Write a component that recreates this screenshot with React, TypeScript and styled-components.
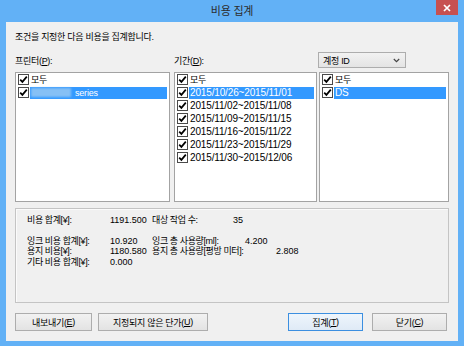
import React from "react";
import styled, { createGlobalStyle } from "styled-components";

const GlobalStyle = createGlobalStyle`
  html, body { margin: 0; padding: 0; }
  body {
    width: 464px;
    height: 346px;
    overflow: hidden;
    font-family: "Liberation Sans", "Noto Sans CJK KR", sans-serif;
    color: #000;
  }
`;

const Window = styled.div`
  width: 464px;
  height: 346px;
  box-sizing: border-box;
  background: #62b1f6;
  padding: 0 6px 5px;
  display: flex;
  flex-direction: column;
`;

const TitleBar = styled.div`
  height: 22px;
  flex: none;
  display: grid;
  grid-template-columns: 1fr auto 1fr;
  align-items: start;
`;

const Title = styled.div`
  grid-column: 2;
  line-height: 23px;
  font-size: 11px;
  color: #2d2d2d;
  letter-spacing: -0.2px;
`;

const CloseButton = styled.div`
  grid-column: 3;
  justify-self: end;
  width: 22px;
  height: 15px;
  background: #c75050;
  display: flex;
  align-items: center;
  justify-content: center;
`;

const Client = styled.div`
  flex: 1;
  background: #f0f0f0;
  padding: 8px 9px 0 9px;
  display: flex;
  flex-direction: column;
  font-size: 9px;
`;

const Intro = styled.div`
  line-height: 14px;
  letter-spacing: -0.3px;
`;

const Header = styled.div`
  display: flex;
  align-items: center;
  height: 16px;
  margin-top: 8px;
`;

const FieldLabel = styled.div<{ $w: number }>`
  width: ${(p) => p.$w}px;
  flex: none;
  letter-spacing: -0.3px;
  padding-top: 1px;
`;

const Combo = styled.div`
  width: 88px;
  height: 16px;
  box-sizing: border-box;
  border: 1px solid #adadad;
  background: linear-gradient(#f2f2f2, #e4e4e4);
  display: flex;
  align-items: center;
  justify-content: space-between;
  padding: 0 5px 0 4px;
  letter-spacing: -0.3px;
`;

const Lists = styled.div`
  display: flex;
  height: 130px;
  margin-top: 4px;
`;

const ListBox = styled.div<{ $w: number; $ml: number }>`
  width: ${(p) => p.$w}px;
  margin-left: ${(p) => p.$ml}px;
  flex: none;
  box-sizing: border-box;
  border: 1px solid #a3a3a3;
  background: #fff;
  padding: 0 0 0 2px;
  display: flex;
  flex-direction: column;
`;

const ListRow = styled.div`
  height: 13px;
  display: flex;
  align-items: center;
`;

const CheckBox = styled.div`
  width: 11px;
  height: 11px;
  box-sizing: border-box;
  border: 1px solid #4a4a4a;
  background: #fff;
  flex: none;
  display: flex;
  align-items: center;
  justify-content: center;
`;

const ItemText = styled.div<{ $selected?: boolean; $date?: boolean }>`
  flex: 1;
  height: 12px;
  line-height: 12px;
  margin: 0 2px 0 1px;
  padding-left: 1px;
  font-size: ${(p) => (p.$date ? "10px" : "9px")};
  letter-spacing: ${(p) => (p.$date ? "-0.15px" : "-0.2px")};
  background: ${(p) => (p.$selected ? "#3399ff" : "transparent")};
  color: ${(p) => (p.$selected ? "#fff" : "#000")};
  display: flex;
  align-items: center;
  white-space: nowrap;
`;

const Blurred = styled.span`
  display: inline-block;
  width: 40px;
  height: 9px;
  margin-right: 4px;
  background: #86c0f5;
  filter: blur(1.2px);
`;

const Summary = styled.div`
  margin-top: 6px;
  height: 95px;
  box-sizing: border-box;
  border: 1px solid #c4c4c4;
  box-shadow: inset 1px 1px 0 #fbfbfb;
  padding: 6px 11px;
  display: flex;
  flex-direction: column;
`;

const SumRow = styled.div<{ $gapTop?: number }>`
  display: grid;
  grid-template-columns: 83px 42px auto;
  line-height: 10.5px;
  height: 10.5px;
  margin-top: ${(p) => p.$gapTop ?? 0}px;
  white-space: nowrap;
`;

const SumLabel = styled.span`
  letter-spacing: -0.4px;
`;

const Pair = styled.span`
  display: flex;
`;

const PairLabel = styled.span<{ $w: number }>`
  width: ${(p) => p.$w}px;
  flex: none;
  letter-spacing: -0.4px;
`;

const ButtonRow = styled.div`
  display: flex;
  justify-content: space-between;
  margin-top: 10px;
  padding-right: 2px;
`;

const ButtonGroup = styled.div<{ $gap: number }>`
  display: flex;
  gap: ${(p) => p.$gap}px;
`;

const Button = styled.div<{ $w: number; $default?: boolean }>`
  width: ${(p) => p.$w}px;
  height: 18px;
  box-sizing: border-box;
  border: 1px solid ${(p) => (p.$default ? "#3c8fe0" : "#adadad")};
  background: ${(p) =>
    p.$default ? "linear-gradient(#eef5fc, #dfeaf6)" : "linear-gradient(#f2f2f2, #e3e3e3)"};
  display: flex;
  align-items: center;
  justify-content: center;
  letter-spacing: -0.3px;
`;

const Check = () => (
  <svg width="9" height="9" viewBox="0 0 9 9">
    <path d="M1.2 4.6 L3.4 6.9 L7.8 1.6" fill="none" stroke="#000" strokeWidth="1.7" />
  </svg>
);

const Item: React.FC<{ selected?: boolean; date?: boolean; children: React.ReactNode }> = ({
  selected,
  date,
  children,
}) => (
  <ListRow>
    <CheckBox>
      <Check />
    </CheckBox>
    <ItemText $selected={selected} $date={date}>
      {children}
    </ItemText>
  </ListRow>
);

const periods = [
  "2015/10/26~2015/11/01",
  "2015/11/02~2015/11/08",
  "2015/11/09~2015/11/15",
  "2015/11/16~2015/11/22",
  "2015/11/23~2015/11/29",
  "2015/11/30~2015/12/06",
];

export default function App() {
  return (
    <>
      <GlobalStyle />
      <Window>
        <TitleBar>
          <Title>비용 집계</Title>
          <CloseButton>
            <svg width="8" height="8" viewBox="0 0 8 8">
              <path d="M1 1 L7 7 M7 1 L1 7" stroke="#fff" strokeWidth="1.7" />
            </svg>
          </CloseButton>
        </TitleBar>
        <Client>
          <Intro>조건을 지정한 다음 비용을 집계합니다.</Intro>
          <Header>
            <FieldLabel $w={159}>
              프린터(<u>P</u>):
            </FieldLabel>
            <FieldLabel $w={144}>
              기간(<u>D</u>):
            </FieldLabel>
            <Combo>
              <span>계정 ID</span>
              <svg width="7" height="5" viewBox="0 0 7 5">
                <path d="M0.8 1 L3.5 3.6 L6.2 1" fill="none" stroke="#444" strokeWidth="1.2" />
              </svg>
            </Combo>
          </Header>
          <Lists>
            <ListBox $w={155} $ml={0}>
              <Item>모두</Item>
              <Item selected>
                <Blurred />
                series
              </Item>
            </ListBox>
            <ListBox $w={143} $ml={4}>
              <Item>모두</Item>
              {periods.map((p, i) => (
                <Item key={p} date selected={i === 0}>
                  {p}
                </Item>
              ))}
            </ListBox>
            <ListBox $w={130} $ml={2}>
              <Item>모두</Item>
              <Item selected date>
                DS
              </Item>
            </ListBox>
          </Lists>
          <Summary>
            <SumRow>
              <SumLabel>비용 합계[¥]:</SumLabel>
              <span>1191.500</span>
              <Pair>
                <PairLabel $w={81}>대상 작업 수:</PairLabel>
                <span>35</span>
              </Pair>
            </SumRow>
            <SumRow $gapTop={10}>
              <SumLabel>잉크 비용 합계[¥]:</SumLabel>
              <span>10.920</span>
              <Pair>
                <PairLabel $w={93}>잉크 총 사용량[ml]:</PairLabel>
                <span>4.200</span>
              </Pair>
            </SumRow>
            <SumRow>
              <SumLabel>용지 비용[¥]:</SumLabel>
              <span>1180.580</span>
              <Pair>
                <PairLabel $w={124}>용지 총 사용량[평방 미터]:</PairLabel>
                <span>2.808</span>
              </Pair>
            </SumRow>
            <SumRow>
              <SumLabel>기타 비용 합계[¥]:</SumLabel>
              <span>0.000</span>
            </SumRow>
          </Summary>
          <ButtonRow>
            <ButtonGroup $gap={6}>
              <Button $w={77}>
                내보내기(<u>E</u>)
              </Button>
              <Button $w={110}>
                지정되지 않은 단가(<u>U</u>)
              </Button>
            </ButtonGroup>
            <ButtonGroup $gap={9}>
              <Button $w={75} $default>
                집계(<u>T</u>)
              </Button>
              <Button $w={75}>
                닫기(<u>C</u>)
              </Button>
            </ButtonGroup>
          </ButtonRow>
        </Client>
      </Window>
    </>
  );
}
